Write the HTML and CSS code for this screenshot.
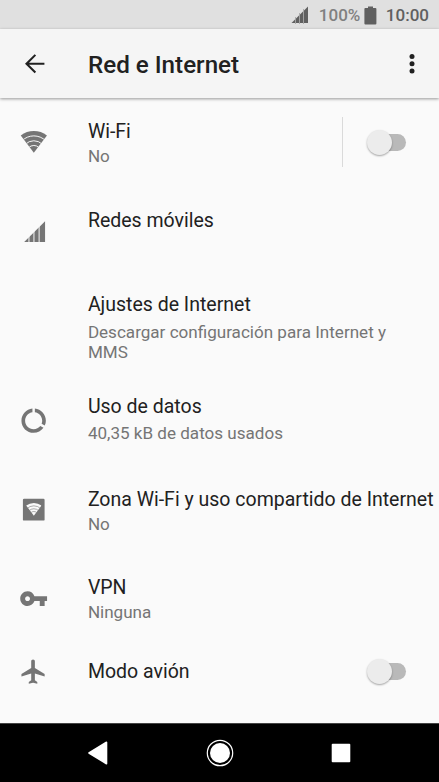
FILE: index.html
```html
<!DOCTYPE html>
<html lang="es">
<head>
<meta charset="utf-8">
<title>Red e Internet</title>
<link rel="stylesheet" href="styles.css">
</head>
<body>
<div class="screen">
  <div class="status">
    <svg class="status-signal" width="18" height="18" viewBox="0 0 18 18"><path d="M.5 17 17 .5V17z" fill="#606060"/><path d="M4.500 11v7M8.500 7v11M12.500 3v15" stroke="#a8a8a8" stroke-width=".9"/></svg>
    <span class="percent">100%</span>
    <svg class="status-battery" width="13" height="19" viewBox="0 0 13 19"><path d="M1.300 2H4V.5h5V2h2.400q1 0 1 1v14.400q0 1-1 1H1.400q-1 0-1-1V3q0-1 .9-1z" fill="#606060"/></svg>
    <span class="clock">10:00</span>
  </div>
  <header class="bar">
    <svg class="icon back" viewBox="0 0 24 24"><path d="M20 11.200H7.400l5.790-5.790L12 4.200l-7.900 7.800 7.900 7.800 1.190-1.210L7.400 12.800H20z"/></svg>
    <h1 class="heading">Red e Internet</h1>
    <svg class="more" width="6" height="22" viewBox="0 0 6 22"><circle cx="3" cy="3.500" r="2.500"/><circle cx="3" cy="10.800" r="2.500"/><circle cx="3" cy="18.100" r="2.500"/></svg>
  </header>
  <main class="list">
    <section class="row row-wifi">
      <svg class="icon" viewBox="0 0 30 30">
        <clipPath id="fan"><path d="M15.200 26.300 1.800 8.700A22 22 0 0 1 28.600 8.700z"/></clipPath>
        <g clip-path="url(#fan)"><rect width="30" height="30"/><g class="gap"><circle cx="15.200" cy="26.300" r="17.200"/><circle cx="15.200" cy="26.300" r="12.200"/><circle cx="15.200" cy="26.300" r="7.400"/></g></g>
      </svg>
      <div class="text"><div class="title">Wi-Fi</div><div class="sub">No</div></div>
      <div class="divider"></div>
      <div class="toggle"><div class="thumb"></div></div>
    </section>
    <section class="row row-mobile">
      <svg class="icon" viewBox="0 0 30 30"><path d="M5.300 25.700 26.700 4.300v21.400z"/><path class="gap" d="M10.200 14v13M15.300 9v18M20.600 4v23"/></svg>
      <div class="text"><div class="title">Redes móviles</div></div>
    </section>
    <section class="row row-settings">
      <div class="icon"></div>
      <div class="text"><div class="title">Ajustes de Internet</div><div class="sub">Descargar configuración para Internet y MMS</div></div>
    </section>
    <section class="row row-data">
      <svg class="icon" viewBox="0 0 24 24"><path d="M13 2.050v3.030c3.390.49 6 3.390 6 6.920 0 .9-.18 1.750-.48 2.540l2.600 1.530c.56-1.240.88-2.620.88-4.070 0-5.180-3.950-9.450-9-9.950zM12 19c-3.870 0-7-3.130-7-7 0-3.530 2.610-6.430 6-6.920V2.050c-5.060.5-9 4.760-9 9.950 0 5.520 4.470 10 9.990 10 3.310 0 6.240-1.610 8.060-4.090l-2.600-1.530C16.170 17.980 14.210 19 12 19z"/></svg>
      <div class="text"><div class="title">Uso de datos</div><div class="sub">40,35 kB de datos usados</div></div>
    </section>
    <section class="row row-hotspot">
      <svg class="icon" viewBox="0 0 30 30"><rect x="4" y="3.800" width="22.200" height="22.400" rx="1.200"/>
        <clipPath id="fan-small"><path d="M15.200 21.300 7.400 10.800A13 13 0 0 1 23 10.800z"/></clipPath>
        <g clip-path="url(#fan-small)"><rect class="light" width="30" height="30"/><g class="gap-dark"><circle cx="15.200" cy="21.300" r="10.200"/><circle cx="15.200" cy="21.300" r="7.200"/><circle cx="15.200" cy="21.300" r="4.400"/></g></g>
      </svg>
      <div class="text"><div class="title">Zona Wi-Fi y uso compartido de Internet</div><div class="sub">No</div></div>
    </section>
    <section class="row row-vpn">
      <svg class="icon" viewBox="0 0 24 24"><path d="M12.650 10C11.830 7.670 9.610 6 7 6c-3.310 0-6 2.690-6 6s2.690 6 6 6c2.610 0 4.830-1.670 5.650-4H17v4h4v-4h2v-4H12.650zM7 14c-1.100 0-2-.9-2-2s.9-2 2-2 2 .9 2 2-.9 2-2 2z"/></svg>
      <div class="text"><div class="title">VPN</div><div class="sub">Ninguna</div></div>
    </section>
    <section class="row row-plane">
      <svg class="icon" viewBox="0 0 24 24"><path d="M21 16v-2l-8-5V3.500c0-.83-.67-1.500-1.500-1.500S10 2.670 10 3.500V9l-8 5v2l8-2.500V19l-2 1.500V22l3.500-1 3.500 1v-1.500L13 19v-5.500l8 2.500z"/></svg>
      <div class="text"><div class="title">Modo avión</div></div>
      <div class="toggle"><div class="thumb"></div></div>
    </section>
  </main>
  <nav class="nav">
    <svg width="22" height="28" viewBox="0 0 22 28"><path d="M2 14 19.500 3.300V24.700z" fill="#fff" stroke="#fff" stroke-width="1.600" stroke-linejoin="round"/></svg>
    <svg width="28" height="28" viewBox="0 0 28 28"><circle cx="14" cy="14" r="12.700" fill="none" stroke="#fff" stroke-width="1.200"/><circle cx="14" cy="14" r="10" fill="#fff"/></svg>
    <svg width="20" height="28" viewBox="0 0 20 28"><rect x=".7" y="4.700" width="18.600" height="18.600" rx="1" fill="#fff"/></svg>
  </nav>
</div>
</body>
</html>
```

FILE: styles.css
```css
* { box-sizing: border-box; }
body { margin: 0; font-family: Roboto, "Liberation Sans", sans-serif; background: #fafafa; }
.screen { width: 439px; height: 782px; display: flex; flex-direction: column; overflow: hidden; }

.status { height: 29px; flex: none; background: #e0e0e0; display: flex; align-items: center; justify-content: flex-end; padding: 1px 10px 0 0; font-size: 17px; font-weight: 500; line-height: 20px; }
.status-signal { margin-right: 10px; }
.percent { color: #808080; font-weight: 500; margin-right: 4px; }
.status-battery { margin-right: 8.5px; }
.clock { color: #606060; }

.bar { height: 69px; flex: none; background: #f5f5f5; display: flex; align-items: center; padding: 0 24px 0 19.5px; box-shadow: 0 1px 3px rgba(0, 0, 0, .4); z-index: 1; }
.heading { margin: 2px 0 0; flex: 1; font-size: 24.2px; font-weight: 500; line-height: 30px; color: #212121; }
.icon { width: 29.3px; height: 29.3px; flex: none; margin-right: 39.2px; fill: #757575; }
.back, .more { fill: #212121; }

.list { flex: 1; display: flex; flex-direction: column; }
.row { display: flex; align-items: center; padding-left: 19.4px; padding-right: 33px; flex: none; }
.text { flex: 1; align-self: stretch; }
.title { font-size: 19.5px; line-height: 24px; color: #212121; white-space: nowrap; }
.sub { font-size: 17.07px; line-height: 20px; color: #757575; margin-top: 2px; }

.row-wifi { height: 88px; }
.row-wifi .text { padding-top: 22px; }
.row-mobile { height: 91px; }
.row-mobile .text { padding-top: 23px; }
.row-settings { height: 99px; }
.row-settings .text { padding-top: 16px; }
.row-settings .sub { margin-top: 5px; }
.row-data { height: 90px; }
.row-data .text { padding-top: 18.5px; }
.row-data .sub { margin-top: 4.5px; }
.row-hotspot { height: 87px; padding-right: 0; }
.row-hotspot .text { padding-top: 21.5px; }
.row-vpn { height: 91px; }
.row-vpn .text { padding-top: 23px; }
.row-plane { height: 56px; }
.row-plane .text { padding-top: 16px; }

.gap { fill: none; stroke: #fafafa; stroke-width: 1; }
.light { fill: #fafafa; }
.gap-dark { fill: none; stroke: #757575; stroke-width: .6; }

.divider { width: 1px; height: 50px; background: #dadada; margin-right: 28px; }
.toggle { width: 35px; height: 17px; border-radius: 9px; background: #b9b9b9; display: flex; align-items: center; }
.thumb { width: 25px; height: 25px; flex: none; margin-left: -4px; border-radius: 50%; background: #ececec; box-shadow: 0 1px 2px rgba(0, 0, 0, .35); }
.row-plane .toggle { margin-bottom: 1px; }

.nav { height: 59px; flex: none; background: #000; border-top: 1px solid #444; display: grid; grid-template-columns: 118.5px 125.5px 20px; align-items: center; padding: 0 0 1px 87px; }
```
